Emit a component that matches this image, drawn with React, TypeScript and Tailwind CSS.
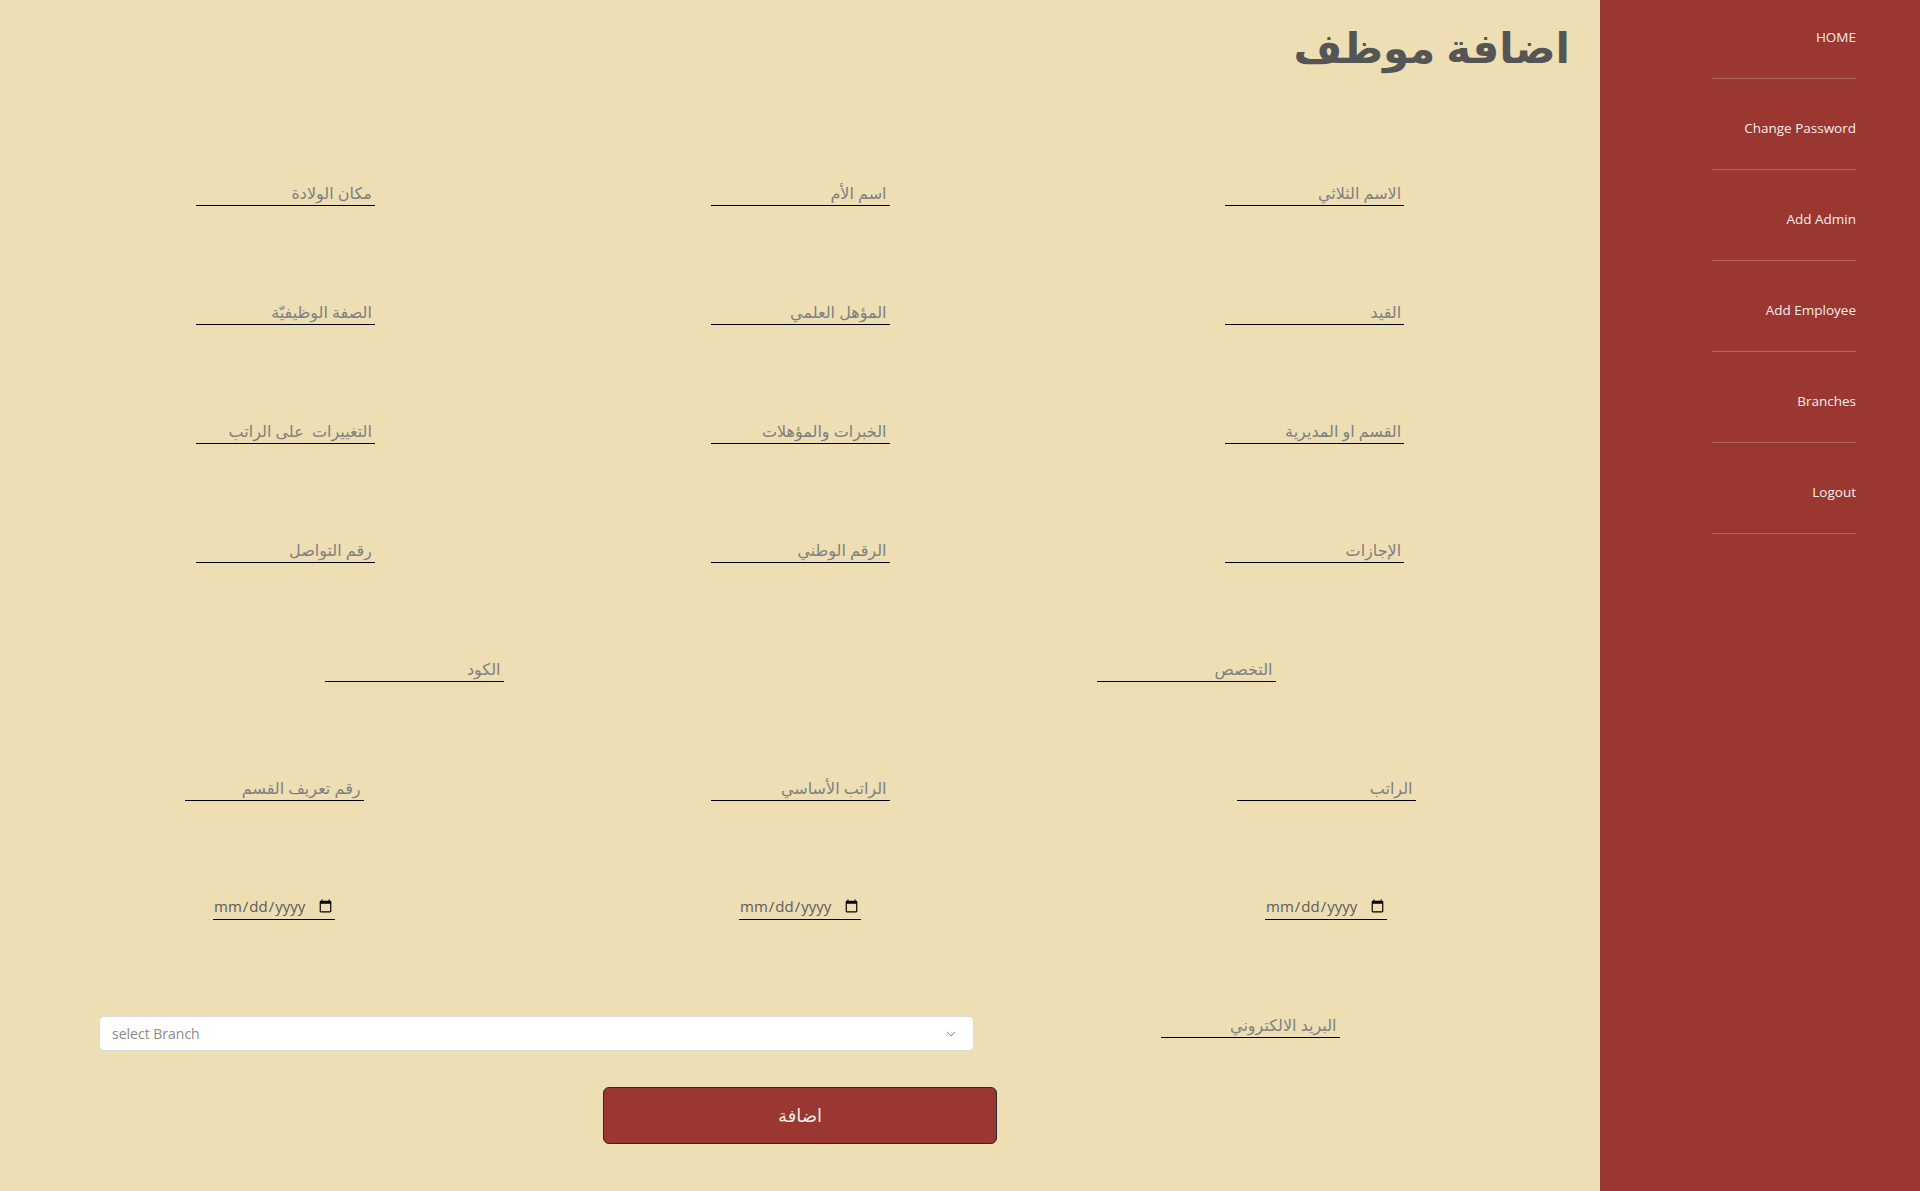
import { ChevronDown } from 'lucide-react'

const navLinks = ['HOME', 'Change Password', 'Add Admin', 'Add Employee', 'Branches', 'Logout']

// الصفوف من اليمين لليسار
const rowsTop = [
  ['الاسم الثلاثي', 'اسم الأم', 'مكان الولادة'],
  ['القيد', 'المؤهل العلمي', 'الصفة الوظيفيّة'],
  ['القسم او المديرية', 'الخبرات والمؤهلات', 'التغييرات  على الراتب'],
  ['الإجازات', 'الرقم الوطني', 'رقم التواصل'],
]

function Field({ label }: { label: string }) {
  return (
    <input
      type="text"
      placeholder={label}
      className="w-[179px] h-[26px] border-b border-black bg-transparent px-[3px] text-[16px] text-right text-[#333] outline-none placeholder:text-[#808080]"
    />
  )
}

function DateField() {
  return (
    <input
      type="date"
      dir="ltr"
      className="w-[122px] h-[26px] border-b border-black bg-transparent text-[15px] text-[#5c5c5c] outline-none"
    />
  )
}

export default function App() {
  return (
    <div className="flex min-h-screen w-full bg-[#eddeb3]" style={{ fontFamily: '"Open Sans", "DejaVu Sans", sans-serif' }}>
      <main className="flex-1 flex flex-col" dir="rtl">
        {/* العنوان */}
        <div className="h-[180px] pr-[30px] pt-[22px]">
          <h1 className="text-[42px] font-bold leading-[1.2] text-[#555555]">اضافة موظف</h1>
        </div>

        {/* الحقول */}
        {rowsTop.map((row, i) => (
          <div key={i} className="h-[119px] grid grid-cols-3 px-[28px]">
            {row.map((label) => (
              <div key={label} className="flex justify-center">
                <Field label={label} />
              </div>
            ))}
          </div>
        ))}

        <div className="h-[119px] grid grid-cols-2 px-[28px]">
          <div className="flex justify-center">
            <Field label="التخصص" />
          </div>
          <div className="flex justify-center">
            <Field label="الكود" />
          </div>
        </div>

        <div className="h-[119px] grid grid-cols-3 px-[11px]">
          {['الراتب', 'الراتب الأساسي', 'رقم تعريف القسم'].map((label) => (
            <div key={label} className="flex justify-center">
              <Field label={label} />
            </div>
          ))}
        </div>

        <div className="h-[119px] grid grid-cols-3 px-[11px]">
          {[0, 1, 2].map((k) => (
            <div key={k} className="flex justify-center">
              <DateField />
            </div>
          ))}
        </div>

        <div className="flex items-start pl-[99px] pr-[74px]">
          <div className="flex-1 flex justify-center -mt-[1px]">
            <Field label="البريد الالكتروني" />
          </div>
          <div dir="ltr" className="mt-[3px] w-[875px] h-[35px] flex items-center justify-between rounded-[5px] border border-[#dcdcdc] bg-white pl-[12px] pr-[14px]">
            <span className="text-[14px] text-[#8a8a8a]">select Branch</span>
            <ChevronDown size={16} strokeWidth={1.5} className="text-[#8a8a8a]" />
          </div>
        </div>

        <div className="flex justify-center pt-[36px]">
          <button className="w-[394px] h-[57px] rounded-[6px] border border-[#2b2b2b] bg-[#993730] text-[18px] text-[#f5eaea]">
            اضافة
          </button>
        </div>
      </main>

      {/* القائمة الجانبية */}
      <aside className="w-[320px] shrink-0 bg-[#993730]">
        <ul className="ml-[112px] mr-[64px] text-right">
          {navLinks.map((link, i) => (
            <li
              key={link}
              className={`border-b border-[#b5655f] pb-[31px] ${i === 0 ? 'pt-[27px]' : 'pt-[39px]'}`}
            >
              <a href="#" className="block text-[13.5px] leading-[20px] text-[#f6ecec]">
                {link}
              </a>
            </li>
          ))}
        </ul>
      </aside>
    </div>
  )
}
